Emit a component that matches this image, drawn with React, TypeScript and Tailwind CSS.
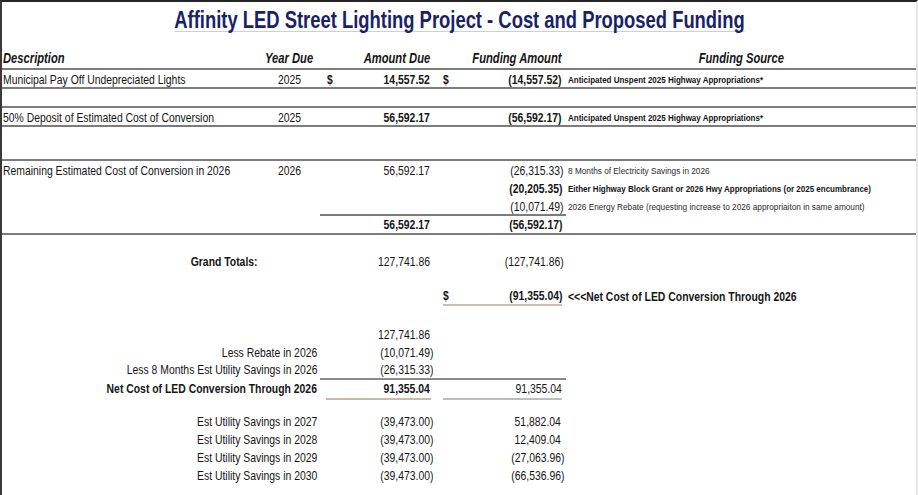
import React from "react";

const GRID = "grid grid-cols-[256px_62px_116px_130px_1fr]";

function L({ children, className = "" }: { children: React.ReactNode; className?: string }) {
  return <span className={`inline-block whitespace-nowrap scale-x-80 origin-left ${className}`}>{children}</span>;
}
function R({ children, className = "" }: { children: React.ReactNode; className?: string }) {
  return <span className={`inline-block whitespace-nowrap scale-x-80 origin-right ${className}`}>{children}</span>;
}
function C({ children, className = "" }: { children: React.ReactNode; className?: string }) {
  return <span className={`inline-block whitespace-nowrap scale-x-80 origin-center ${className}`}>{children}</span>;
}
function Small({ children, bold = false }: { children: React.ReactNode; bold?: boolean }) {
  return (
    <span
      className={`inline-block whitespace-nowrap origin-left text-[8.5px] leading-[18px] ${
        bold ? "font-bold scale-x-[0.94]" : "font-normal text-[#2a2a2a] scale-x-[0.97]"
      }`}
    >
      {children}
    </span>
  );
}

export default function App() {
  return (
    <div className="w-[918px] h-[495px] overflow-hidden bg-white border-t-2 border-l-2 border-r-2 border-t-[#262626] border-l-[#3a3a3a] border-r-[#e6e6e6] text-[#151515] font-['Liberation_Sans',Arial,sans-serif] text-[13px] leading-[18px]">
      {/* Title */}
      <div className="h-[36px] flex items-center justify-center overflow-visible">
        <span className="inline-block whitespace-nowrap scale-x-80 origin-center text-[23px] leading-[28px] font-bold text-[#17226a] underline decoration-[#c9d0e2] decoration-1 underline-offset-[3px] [text-decoration-skip-ink:none]">
          Affinity LED Street Lighting Project - Cost and Proposed Funding
        </span>
      </div>

      {/* Header */}
      <div className={`${GRID} h-[32px] border-b-2 border-[#7c7c7c] items-end text-[14px] leading-[20px] font-bold italic`}>
        <div className="pl-[1px]"><L>Description</L></div>
        <div className="text-center"><C>Year Due</C></div>
        <div className="text-right pr-[6px]"><R>Amount Due</R></div>
        <div className="text-right pr-[5px]"><R>Funding Amount</R></div>
        <div className="text-center"><C>Funding Source</C></div>
      </div>

      {/* Row 1 */}
      <div className={`${GRID} h-[19px] border-b-2 border-[#7c7c7c] items-center leading-[17px]`}>
        <div className="pl-[1px]"><L>Municipal Pay Off Undepreciated Lights</L></div>
        <div className="text-center"><C>2025</C></div>
        <div className="flex justify-between pl-[7px] pr-[6px] font-bold">
          <L>$</L>
          <R>14,557.52</R>
        </div>
        <div className="flex justify-between pl-[7px] pr-[5px] font-bold">
          <L>$</L>
          <R>(14,557.52)</R>
        </div>
        <div className="pl-[2px]"><Small bold>Anticipated Unspent 2025 Highway Appropriations*</Small></div>
      </div>

      {/* Empty */}
      <div className="h-[19px] border-b-2 border-[#7c7c7c]" />

      {/* Row 2 */}
      <div className={`${GRID} h-[19px] border-b-2 border-[#7c7c7c] items-center leading-[17px]`}>
        <div className="pl-[1px]"><L>50% Deposit of Estimated Cost of Conversion</L></div>
        <div className="text-center"><C>2025</C></div>
        <div className="text-right pr-[6px] font-bold"><R>56,592.17</R></div>
        <div className="text-right pr-[5px] font-bold"><R>(56,592.17)</R></div>
        <div className="pl-[2px]"><Small bold>Anticipated Unspent 2025 Highway Appropriations*</Small></div>
      </div>

      {/* Empty */}
      <div className="h-[34px] border-b-2 border-[#7c7c7c]" />

      {/* Row 3 group */}
      <div className={`${GRID} h-[18px] items-center`}>
        <div className="pl-[1px]"><L>Remaining Estimated Cost of Conversion in 2026</L></div>
        <div className="text-center"><C>2026</C></div>
        <div className="text-right pr-[6px]"><R>56,592.17</R></div>
        <div className="text-right pr-[3px]"><R>(26,315.33)</R></div>
        <div className="pl-[2px]"><Small>8 Months of Electricity Savings in 2026</Small></div>
      </div>
      <div className={`${GRID} h-[18px] items-center`}>
        <div />
        <div />
        <div />
        <div className="text-right pr-[4px] font-bold"><R>(20,205.35)</R></div>
        <div className="pl-[2px]"><Small bold>Either Highway Block Grant or 2026 Hwy Appropriations (or 2025 encumbrance)</Small></div>
      </div>
      <div className={`${GRID} h-[17px] items-center`}>
        <div />
        <div />
        <div />
        <div className="text-right pr-[3px]"><R>(10,071.49)</R></div>
        <div className="pl-[2px]"><Small>2026 Energy Rebate (requesting increase to 2026 appropriaiton in same amount)</Small></div>
      </div>
      <div className={`${GRID} h-[21px] border-b-2 border-[#7c7c7c]`}>
        <div />
        <div />
        <div className="border-t-2 border-[#7c7c7c] text-right pr-[6px] font-bold leading-[17px]"><R>56,592.17</R></div>
        <div className="border-t-2 border-[#7c7c7c] text-right pr-[4px] font-bold leading-[17px]"><R>(56,592.17)</R></div>
        <div />
      </div>

      {/* Lower section */}
      <div className="h-[18px]" />
      <div className={`${GRID} h-[18px] items-center`}>
        <div className="text-right font-bold"><R>Grand Totals:</R></div>
        <div />
        <div className="text-right pr-[6px]"><R>127,741.86</R></div>
        <div className="text-right pr-[2px]"><R>(127,741.86)</R></div>
        <div />
      </div>
      <div className="h-[17px]" />
      <div className={`${GRID} h-[18px]`}>
        <div />
        <div />
        <div />
        <div className="ml-[7px] mr-[4px] flex justify-between items-center border-b-2 border-[#cbbfb4] font-bold leading-[16px]">
          <L>$</L>
          <R>(91,355.04)</R>
        </div>
        <div className="pl-[2px] font-bold flex items-center"><L>&lt;&lt;&lt;Net Cost of LED Conversion Through 2026</L></div>
      </div>
      <div className="h-[20px]" />
      <div className={`${GRID} h-[18px] items-center`}>
        <div />
        <div />
        <div className="text-right pr-[6px]"><R>127,741.86</R></div>
        <div />
        <div />
      </div>
      <div className={`${GRID} h-[18px] items-center`}>
        <div className="col-span-2 text-right pr-[3px]"><R>Less Rebate in 2026</R></div>
        <div className="text-right pr-[3px]"><R>(10,071.49)</R></div>
        <div />
        <div />
      </div>
      <div className={`${GRID} h-[18px]`}>
        <div className="col-span-2 text-right pr-[3px] leading-[16px]"><R>Less 8 Months Est Utility Savings in 2026</R></div>
        <div className="border-b-2 border-[#8a8a8a] text-right pr-[3px] leading-[16px]"><R>(26,315.33)</R></div>
        <div className="border-b-2 border-[#8a8a8a]" />
        <div />
      </div>
      <div className={`${GRID} h-[20px]`}>
        <div className="col-span-2 text-right pr-[3px] font-bold leading-[18px]"><R>Net Cost of LED Conversion Through 2026</R></div>
        <div className="ml-[6px] mr-[5px] border-b-2 border-[#c9b9a8] text-right pr-[1px] font-bold leading-[18px]"><R>91,355.04</R></div>
        <div className="ml-[7px] mr-[4px] border-b-2 border-[#bdbdbd] text-right leading-[18px]"><R>91,355.04</R></div>
        <div />
      </div>
      <div className="h-[13px]" />
      {[
        ["2027", "51,882.04"],
        ["2028", "12,409.04"],
        ["2029", "(27,063.96)"],
        ["2030", "(66,536.96)"],
      ].map(([y, v]) => (
        <div key={y} className={`${GRID} h-[18px] items-center`}>
          <div className="col-span-2 text-right pr-[3px]"><R>Est Utility Savings in {y}</R></div>
          <div className="text-right pr-[3px]"><R>(39,473.00)</R></div>
          <div className={`text-right ${v.startsWith("(") ? "pr-[2px]" : "pr-[5px]"}`}><R>{v}</R></div>
          <div />
        </div>
      ))}
    </div>
  );
}
